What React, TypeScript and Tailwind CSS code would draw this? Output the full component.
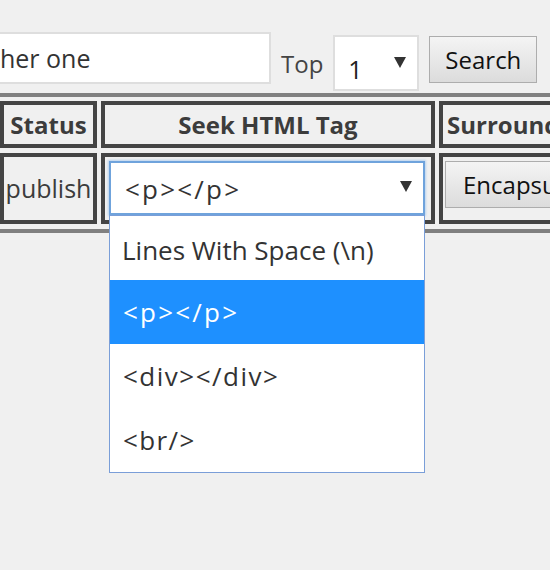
import React from "react";

function Arrow() {
  return (
    <svg width="12" height="11" viewBox="0 0 12 11" className="block">
      <polygon points="0,0 12,0 6,11" fill="#333" />
    </svg>
  );
}

export default function App() {
  return (
    <div className="relative w-[550px] h-[570px] overflow-hidden bg-[#f0f0f0] font-['Open_Sans',sans-serif] text-[#333]">
      {/* search row */}
      <div className="flex items-start pt-[32px]">
        <div className="ml-[-12px] w-[283px] h-[52px] shrink-0 border-2 border-[#dedede] bg-white flex items-center pl-[10px] text-[25px] leading-none text-[#333]">
          her one
        </div>
        <span className="ml-[10px] mt-[14px] text-[24px] leading-[36px] text-[#444] shrink-0">Top</span>
        <div className="ml-[10px] mt-[3px] w-[86px] h-[56px] shrink-0 border-2 border-[#dedede] bg-white flex items-start justify-between pl-[13px] pr-[11px] text-[25px] leading-none text-[#222]">
          <span className="mt-[20px]">1</span>
          <span className="mt-[20px]"><Arrow /></span>
        </div>
        <button className="ml-[10px] mt-[4px] w-[108px] h-[47px] shrink-0 border border-[#adadad] bg-gradient-to-b from-[#f4f4f4] to-[#dcdcdc] text-[24px] leading-none text-[#111] flex items-center justify-center">
          Search
        </button>
      </div>

      {/* table */}
      <div className="mt-[2px] border-t-4 border-b-4 border-[#808080] pt-[4px] pb-[5px]">
        <div className="grid grid-cols-[97px_334px_200px] gap-x-[4px] gap-y-[5px]">
          <div className="h-[47px] border-4 border-[#444] flex items-center justify-center font-bold text-[24px] text-[#3c3c3c]">Status</div>
          <div className="h-[47px] border-4 border-[#444] flex items-center justify-center font-bold text-[24px] text-[#3c3c3c]">Seek HTML Tag</div>
          <div className="h-[47px] border-4 border-[#444] flex items-center pl-[4px] font-bold text-[24px] text-[#3c3c3c] whitespace-nowrap overflow-hidden">Surround With</div>

          <div className="h-[71px] border-4 border-[#444] flex items-center justify-center text-[25px] text-[#3c3c3c]">publish</div>
          <div className="h-[71px] border-4 border-[#444] relative">
            <div className="relative ml-[4px] mt-[4px] w-[316px] h-[54px] bg-white border-2 border-[#6fa3dc] shadow-[0_0_2px_1px_#b9d4f0] flex items-center justify-between pl-[14px] pr-[11px] text-[26px] text-[#333]">
              <span className="mt-[2px] tracking-[2.2px]">&lt;p&gt;&lt;/p&gt;</span>
              <span className="mt-[-4px]"><Arrow /></span>
              <div className="absolute z-10 left-[-2px] top-[52px] w-[316px] border border-[#7a9ed8] bg-white">
                <div className="h-[64px] flex items-center pl-[12px] pt-[4px] text-[26px] text-[#333]">Lines With Space (\n)</div>
                <div className="h-[64px] flex items-center pl-[13px] text-[26px] bg-[#1e90ff] text-white tracking-[2.2px]">&lt;p&gt;&lt;/p&gt;</div>
                <div className="h-[64px] flex items-center pl-[13px] text-[26px] text-[#333] tracking-[1.5px]">&lt;div&gt;&lt;/div&gt;</div>
                <div className="h-[64px] flex items-center pl-[13px] text-[26px] text-[#333] tracking-[1.4px]">&lt;br/&gt;</div>
              </div>
            </div>
          </div>
          <div className="h-[71px] border-4 border-[#444] overflow-hidden">
            <button className="ml-[2px] mt-[4px] h-[47px] w-[180px] border border-[#adadad] bg-gradient-to-b from-[#f4f4f4] to-[#dcdcdc] text-[24px] leading-none text-[#111] flex items-center pl-[17px] whitespace-nowrap">
              Encapsulate
            </button>
          </div>
        </div>
      </div>
    </div>
  );
}
